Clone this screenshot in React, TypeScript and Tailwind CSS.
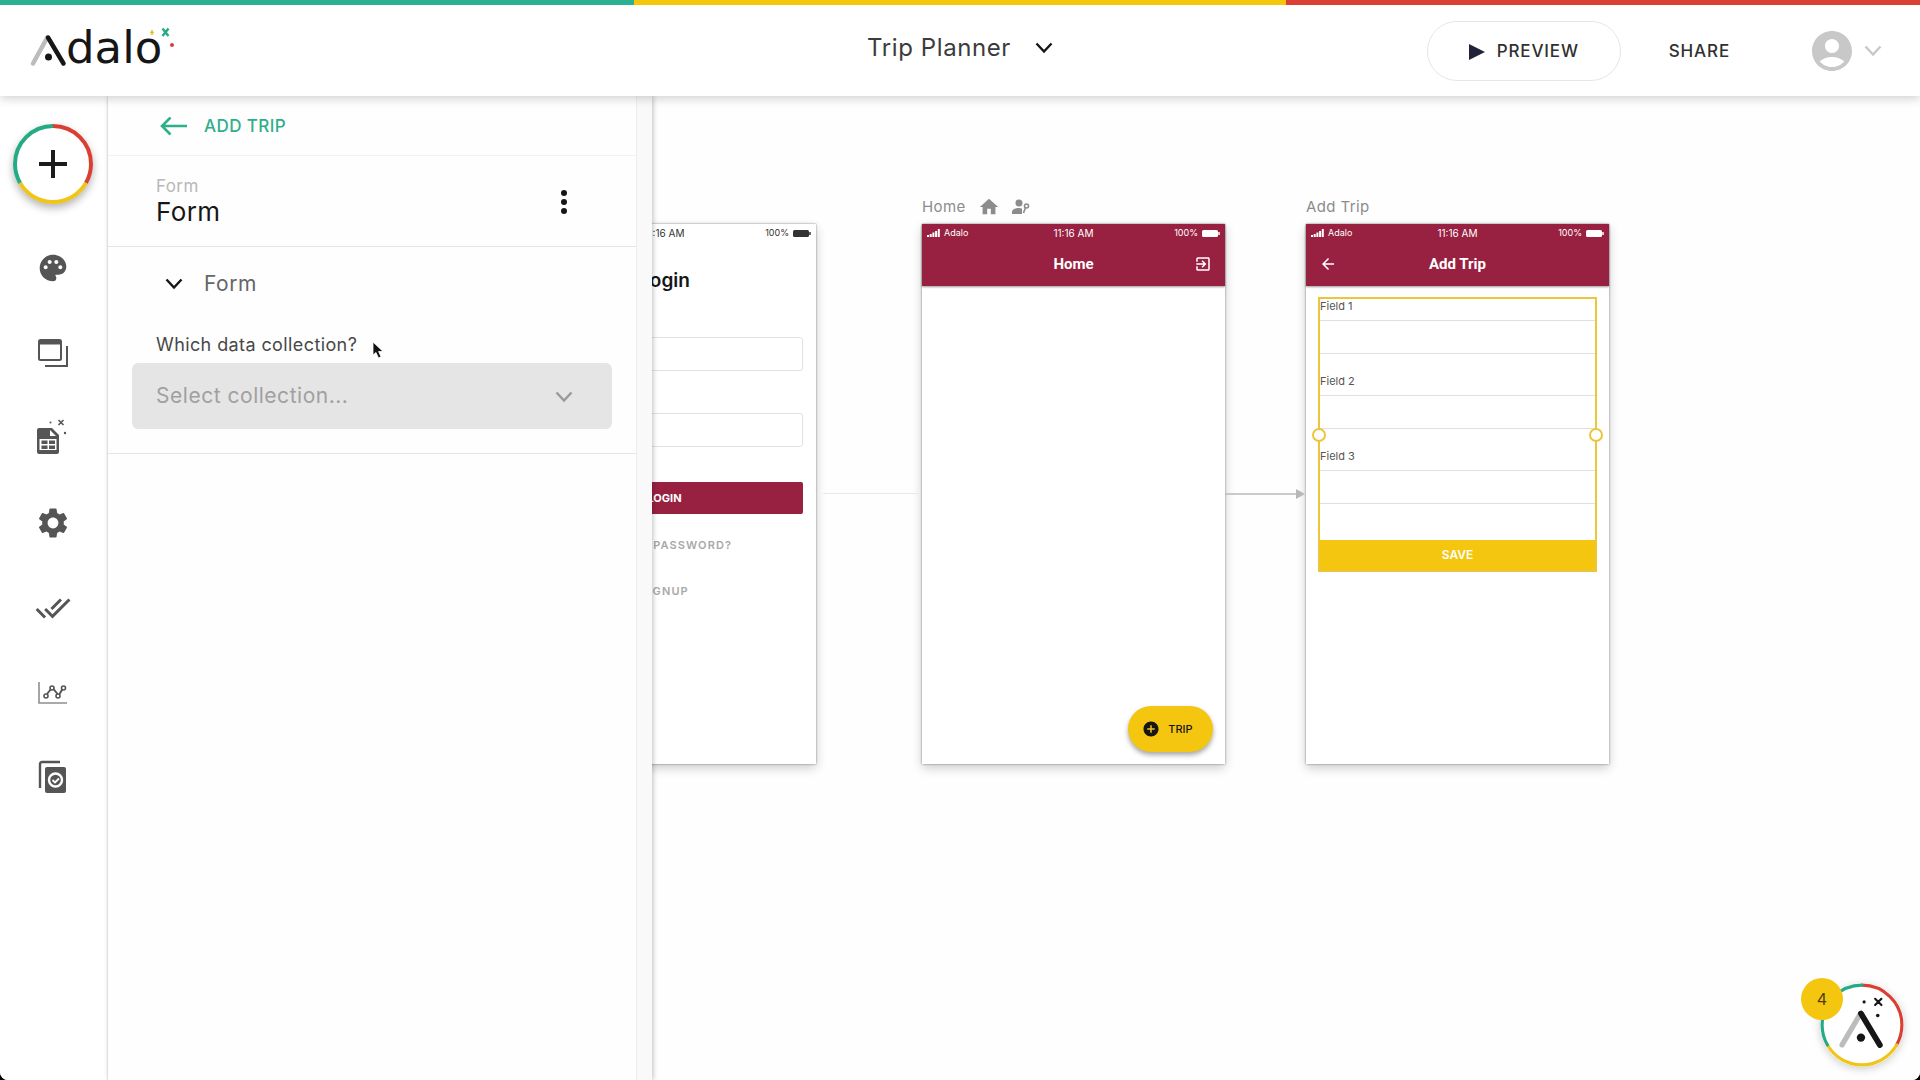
import type { ReactNode } from "react";
import {
  MdAccountCircle,
  MdAddCircle,
  MdArrowBack,
  MdDoneAll,
  MdExitToApp,
  MdHome,
  MdPalette,
  MdSettings,
} from "react-icons/md";

function Chevron({ className }: { className: string }) {
  return (
    <svg viewBox="0 0 18 12" className={`w-[18px] h-3 ${className}`} fill="none" stroke="currentColor" strokeWidth="2.4">
      <path d="M1.5 1.5 9 9.5l7.5-8" />
    </svg>
  );
}

function Ring({ stroke }: { stroke: number }) {
  const arc = { cx: 40, cy: 40, r: 38, fill: "none", strokeWidth: stroke, pathLength: 3, strokeDasharray: "1 2" };
  return (
    <g transform="rotate(-90 40 40)">
      <circle {...arc} stroke="#d93f33" />
      <circle {...arc} stroke="#f0c518" strokeDashoffset={-1} />
      <circle {...arc} stroke="#24ab86" strokeDashoffset={-2} />
    </g>
  );
}

function Logo() {
  return (
    <a href="#" className="flex items-end relative w-[148px] h-12">
      <svg viewBox="0 0 148 48" className="absolute inset-0 w-[148px] h-12" fill="none" strokeLinecap="round">
        <path d="M5 36.500 19 11" stroke="#bcbcbc" strokeWidth="4.500" />
        <path d="M20 10.500 35.500 36.500" stroke="#161616" strokeWidth="4.500" />
        <circle cx="20.500" cy="30" r="3.500" fill="#161616" />
        <path d="m134.500 1.500 6 7.500M140.500 1.500l-6 7.500" stroke="#24ab86" strokeWidth="2.400" strokeLinecap="butt" />
        <path d="M124 3v5M122 5.500h4" stroke="#e3c32b" strokeWidth="1.600" strokeLinecap="butt" />
        <circle cx="144" cy="18" r="2" fill="#d93f33" />
      </svg>
      <span className="ml-[38px] font-['DejaVu_Sans',sans-serif] text-[45px] leading-[54px] text-[#161616]">dalo</span>
    </a>
  );
}

function Header() {
  return (
    <header className="relative z-20 bg-white shadow-[0_2px_10px_rgba(0,0,0,0.2)]">
      <div className="flex h-[5px]">
        <div className="w-[33%] bg-[#29b190]" />
        <div className="w-[34%] bg-[#f6c60c]" />
        <div className="flex-1 bg-[#db4034]" />
      </div>
      <div className="grid grid-cols-[1fr_auto_1fr] items-center h-[91px] px-7">
        <Logo />
        <button className="flex items-center gap-6 pb-1.5 text-2xl tracking-wide text-[#3c3c3c]">
          Trip Planner
          <Chevron className="text-[#161616]" />
        </button>
        <div className="flex items-center justify-end pr-2.5">
          <button className="flex items-center justify-center gap-3 w-[194px] h-[60px] pt-0.5 rounded-full border border-[#e6e6e6] text-[17px] font-medium tracking-wider text-[#303030]">
            <svg viewBox="0 0 16 16" className="w-4 h-4 fill-[#22223a]">
              <path d="M0 0 16 8 0 16z" />
            </svg>
            PREVIEW
          </button>
          <button className="ml-12 pt-0.5 text-[17px] font-medium tracking-wider text-[#303030]">SHARE</button>
          <button aria-label="Account" className="ml-[78px] flex items-center gap-2 text-[#c8c8c8]">
            <MdAccountCircle className="w-12 h-12" />
            <Chevron className="" />
          </button>
        </div>
      </div>
    </header>
  );
}

const railIcons: { label: string; icon: ReactNode }[] = [
  { label: "Branding", icon: <MdPalette className="w-8 h-8" /> },
  {
    label: "Screens",
    icon: (
      <svg viewBox="0 0 32 32" className="w-8 h-8" fill="none" stroke="currentColor" strokeWidth="2">
        <rect x="2" y="3" width="22" height="20" rx="1.500" />
        <path d="M2 5.500h22" strokeWidth="4" />
        <path d="M30 9v20H8" />
      </svg>
    ),
  },
  {
    label: "Database",
    icon: (
      <svg viewBox="0 0 32 40" className="w-8 h-10" fill="currentColor">
        <path fillRule="evenodd" d="M2 10h13l7 7v17a2 2 0 0 1-2 2H2a2 2 0 0 1-2-2V12a2 2 0 0 1 2-2zm11 2v6h6zM2.500 21v11h17V21z" />
        <path d="M4.500 22.500h6v3.500h-6zM12 22.500h6v3.500h-6zM4.500 27.500h6V31h-6zM12 27.500h6V31h-6z" />
        <path d="m21.500 2 5 5M26.500 2l-5 5" stroke="currentColor" strokeWidth="1.600" />
        <circle cx="13.500" cy="4.500" r="1" />
        <circle cx="28" cy="15" r="1.200" />
      </svg>
    ),
  },
  { label: "Settings", icon: <MdSettings className="w-9 h-9" /> },
  { label: "Publish", icon: <MdDoneAll className="w-9 h-9" /> },
  {
    label: "Analytics",
    icon: (
      <svg viewBox="0 0 32 26" className="w-8 h-[26px]" fill="none" stroke="currentColor" strokeWidth="1.600">
        <path d="M2 2v21h28" className="text-[#8f8f8f]" stroke="currentColor" />
        <path d="m10 14 4-5M16.500 9l4 5M22.500 14l3-5" strokeWidth="2" />
        <circle cx="9" cy="16" r="2" />
        <circle cx="15" cy="8" r="2" />
        <circle cx="21" cy="16" r="2" />
        <circle cx="26.500" cy="8" r="2" />
      </svg>
    ),
  },
  {
    label: "Versions",
    icon: (
      <svg viewBox="0 0 32 36" className="w-8 h-9" fill="none" stroke="currentColor">
        <path d="M3 28V4a2 2 0 0 1 2-2h18" strokeWidth="2.400" />
        <rect x="8" y="7" width="21" height="26" rx="2" fill="currentColor" stroke="none" />
        <circle cx="18.500" cy="20" r="6.500" stroke="#fff" strokeWidth="2.400" />
        <path d="m15.500 20 2.500 2.500 4-4" stroke="#fff" strokeWidth="1.800" />
      </svg>
    ),
  },
];

function Rail() {
  return (
    <nav className="w-[108px] shrink-0 flex flex-col items-center border-r border-[#f0f0f0] bg-white pt-7 pr-0.5">
      <button aria-label="Add" className="w-20 h-20 rounded-full bg-white shadow-[0_4px_8px_rgba(0,0,0,0.3)]">
        <svg viewBox="0 0 80 80" className="w-20 h-20">
          <Ring stroke={4} />
          <path d="M40 26v28M26 40h28" stroke="#1c1c1c" strokeWidth="4" />
        </svg>
      </button>
      <div className="flex flex-col items-center mt-[21px]">
        {railIcons.map((item) => (
          <button key={item.label} aria-label={item.label} className="flex items-center justify-center w-12 h-[85px] text-[#555]">
            {item.icon}
          </button>
        ))}
      </div>
    </nav>
  );
}

function Panel() {
  return (
    <aside className="relative z-10 w-[544px] shrink-0 bg-[#f9f9f9] pr-[15px] tracking-wide shadow-[1px_0_5px_rgba(0,0,0,0.25)]">
      <div className="h-full border-r border-[#eee] bg-[#fefefe]">
        <button className="flex items-center gap-4 w-full h-[60px] pl-[52px] pt-0.5 border-b border-[#f2f2f2] text-[17px] font-medium tracking-wide text-[#2fae8b]">
          <svg viewBox="0 0 28 20" className="w-7 h-5" fill="none" stroke="currentColor" strokeWidth="2.600">
            <path d="M27 9H2M10.500 .5 2 9l8.500 8.500" />
          </svg>
          ADD TRIP
        </button>

        <div className="flex items-center justify-between h-[91px] pl-12 pr-[60px] pt-0.5 border-b border-[#e6e6e6]">
          <div>
            <p className="text-[17px] leading-5 text-[#b8b8b8]">Form</p>
            <h1 className="text-[26px] leading-8 text-[#161616]">Form</h1>
          </div>
          <button aria-label="More">
            <svg viewBox="0 0 24 24" className="w-6 h-6 fill-[#161616]">
              <circle cx="12" cy="3" r="3" />
              <circle cx="12" cy="12" r="3" />
              <circle cx="12" cy="21" r="3" />
            </svg>
          </button>
        </div>

        <section className="border-b border-[#e6e6e6] px-6 pb-6">
          <button className="flex items-center gap-[21px] h-[74px] pl-[33px] text-[21px] tracking-wide text-[#666]">
            <Chevron className="text-[#161616]" />
            Form
          </button>
          <label htmlFor="collection" className="block h-[42px] pl-6 pt-3 text-[18px] leading-6 text-[#484848]">
            Which data collection?
          </label>
          <div className="relative">
            <select id="collection" className="appearance-none w-full h-[66px] pl-6 rounded-md bg-[#e5e5e5] text-[21px] tracking-wide text-[#a0a0a0]">
              <option>Select collection...</option>
            </select>
            <Chevron className="absolute right-[39px] top-7 text-[#999] pointer-events-none" />
          </div>
        </section>
      </div>

      <svg viewBox="0 0 12 18" className="absolute left-[264px] top-[245px] w-3 h-[18px]">
        <path d="M1 1v13l3-2.500 2.500 5.500 2.500-1.200L6.600 10.500H11z" fill="#111" stroke="#fff" strokeWidth="0.800" />
      </svg>
    </aside>
  );
}

function StatusBar({ light }: { light?: boolean }) {
  return (
    <div className={`grid grid-cols-3 items-center h-[18px] px-[5px] text-[9px] ${light ? "text-white" : "text-[#333]"}`}>
      <span className="flex items-center gap-1">
        <svg viewBox="0 0 13 8" className="w-[13px] h-2" fill="currentColor">
          <path d="M0 6h2v2H0zM2.700 5h2v3h-2zM5.400 3.500h2V8h-2zM8.100 2h2v6h-2zM10.800 0h2v8h-2z" />
        </svg>
        Adalo
      </span>
      <span className="text-center text-[10px]">11:16 AM</span>
      <span className="flex items-center justify-end gap-1">
        100%
        <svg viewBox="0 0 18 7" className="w-[18px] h-[7px]" fill="currentColor">
          <rect width="16" height="7" rx="1.500" />
          <path d="M17 2v3z" stroke="currentColor" />
        </svg>
      </span>
    </div>
  );
}

// Widths and places are those of the artboards on the free canvas.
function Artboard({ className, name, icons, children }: { className: string; name: string; icons?: ReactNode; children: ReactNode }) {
  return (
    <div className={`absolute top-[98px] w-[303px] ${className}`}>
      <div className="flex items-center gap-3 h-[30px] pb-1 text-[15px] tracking-wide text-[#8c8c8c]">
        {name}
        {icons}
      </div>
      <div className="h-[540px] bg-white shadow-[0_0_2px_rgba(0,0,0,0.45),0_4px_10px_rgba(0,0,0,0.2)]">{children}</div>
    </div>
  );
}

function AppBar({ title, left, right }: { title: string; left?: ReactNode; right?: ReactNode }) {
  return (
    <div className="h-[62px] bg-[#982142] text-white shadow-[0_1px_2px_rgba(0,0,0,0.4)]">
      <StatusBar light />
      <div className="grid grid-cols-[1fr_auto_1fr] items-center h-11 px-[13px]">
        <span>{left}</span>
        <span className="font-['Roboto',sans-serif] text-[15px] font-bold">{title}</span>
        <span className="flex justify-end">{right}</span>
      </div>
    </div>
  );
}

const fields = ["Field 1", "Field 2", "Field 3"];

function Canvas() {
  return (
    <main className="relative flex-1 overflow-hidden bg-[#fefefe]">
      <Artboard className="-left-[139px]" name="Login">
        <StatusBar />
        <h2 className="pt-[23px] text-center text-[19px] leading-8 font-semibold text-[#161616]">Login</h2>
        <div className="px-[13px] pt-10">
          <input aria-label="Email" className="block w-full h-[34px] rounded-[3px] border border-[#e2e2e2]" />
          <input aria-label="Password" className="block w-full h-[34px] mt-[42px] rounded-[3px] border border-[#e2e2e2]" />
          <button className="block w-full h-8 mt-[35px] rounded-[2px] bg-[#982142] text-[11px] font-bold text-white">LOGIN</button>
        </div>
        <div className="flex flex-col items-center gap-[30px] pt-[23px] text-[11px] leading-4 font-semibold tracking-widest text-[#a8a8a8]">
          <button>FORGOT PASSWORD?</button>
          <button>SIGNUP</button>
        </div>
      </Artboard>

      <Artboard
        className="left-[270px]"
        name="Home"
        icons={
          <>
            <MdHome className="w-[22px] h-[22px]" />
            <svg viewBox="0 0 18 16" className="w-[18px] h-4" fill="currentColor">
              <circle cx="7" cy="4" r="3.500" />
              <path d="M0 15v-2c0-3 4.500-4 7-4l3 .4V15z" />
              <circle cx="14.500" cy="7" r="2" fill="none" stroke="currentColor" strokeWidth="1.600" />
              <path d="m13.500 8.500-2 5.500" stroke="currentColor" strokeWidth="1.600" />
            </svg>
          </>
        }
      >
        <AppBar title="Home" right={<MdExitToApp className="w-[18px] h-[18px]" />} />
        <button className="absolute right-3 bottom-3 flex items-center justify-center gap-2 w-[85px] h-[46px] pr-1.5 rounded-full bg-[#f4c60f] text-[11px] font-medium text-[#161616] shadow-[0_3px_5px_rgba(0,0,0,0.35)]">
          <MdAddCircle className="w-[18px] h-[18px]" />
          TRIP
        </button>
      </Artboard>

      <Artboard className="left-[654px]" name="Add Trip">
        <AppBar title="Add Trip" left={<MdArrowBack className="w-[18px] h-[18px]" />} />
        <div className="relative mt-[11px] mx-3 border-2 border-[#edc53c]">
          {fields.map((field) => (
            <label key={field} className="block h-[75px] text-[11px] leading-[14px] text-[#555]">
              <span className="block h-[21px]">{field}</span>
              <input className="block w-full h-[34px] border-y border-[#e0e0e0]" />
            </label>
          ))}
          <button className="block w-full h-[30px] mt-4 bg-[#f4c60f] text-[12px] font-semibold text-white">SAVE</button>
          <span className="absolute -left-2 top-[129px] w-[14px] h-[14px] rounded-full border-2 border-[#edc53c] bg-white" />
          <span className="absolute -right-2 top-[129px] w-[14px] h-[14px] rounded-full border-2 border-[#edc53c] bg-white" />
        </div>
      </Artboard>

      <div className="absolute left-[171px] top-[397px] w-24 h-px bg-[#e8e8e8]" />
      <svg viewBox="0 0 80 10" className="absolute left-[573px] top-[393px] w-20 h-[10px]">
        <path d="M0 5h73" stroke="#b8b8b8" strokeWidth="1.500" />
        <path d="M71 0 80 5l-9 5z" fill="#b8b8b8" />
      </svg>

      <button aria-label="Help" className="absolute right-4 bottom-[13px] w-[84px] h-[84px] rounded-full bg-white shadow-[0_2px_8px_rgba(0,0,0,0.2)]">
        <svg viewBox="0 0 80 80" className="w-[84px] h-[84px]" fill="none" strokeLinecap="round">
          <Ring stroke={3} />
          <path d="M21 59 38 30" stroke="#bcbcbc" strokeWidth="5" />
          <path d="M39 29 57 59" stroke="#161616" strokeWidth="5.500" />
          <circle cx="39" cy="52" r="4" fill="#161616" />
          <path d="m52.500 15 6 6M58.500 15l-6 6" stroke="#161616" strokeWidth="2" />
          <circle cx="42" cy="18" r="1.500" fill="#161616" />
          <circle cx="55" cy="31" r="1.700" fill="#161616" />
        </svg>
        <span className="absolute -left-[19px] -top-[5px] flex items-center justify-center w-[42px] h-[42px] rounded-full bg-[#f4c60f] text-base text-[#4d3f10]">
          4
        </span>
      </button>
    </main>
  );
}

export default function App() {
  return (
    <div className="min-h-screen bg-black font-['Inter',sans-serif]">
      <div className="flex flex-col min-h-screen overflow-hidden rounded-b-lg bg-white">
        <Header />
        <div className="flex flex-1">
          <Rail />
          <Panel />
          <Canvas />
        </div>
      </div>
    </div>
  );
}
